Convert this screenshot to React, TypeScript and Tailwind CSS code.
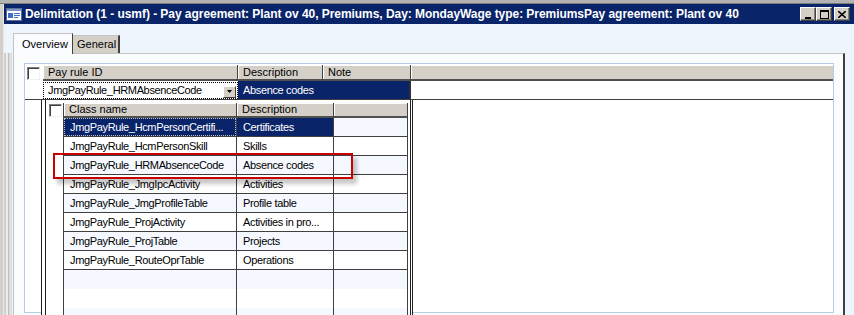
import React from "react";

const classRows = [
  { name: "JmgPayRule_HcmPersonCertifi...", desc: "Certificates" },
  { name: "JmgPayRule_HcmPersonSkill", desc: "Skills" },
  { name: "JmgPayRule_HRMAbsenceCode", desc: "Absence codes" },
  { name: "JmgPayRule_JmgIpcActivity", desc: "Activities" },
  { name: "JmgPayRule_JmgProfileTable", desc: "Profile table" },
  { name: "JmgPayRule_ProjActivity", desc: "Activities in pro..." },
  { name: "JmgPayRule_ProjTable", desc: "Projects" },
  { name: "JmgPayRule_RouteOprTable", desc: "Operations" },
];

function Check() {
  return (
    <div className="w-[13px] h-[13px] bg-white border border-t-[#808080] border-l-[#808080] border-r-[#f0f0f0] border-b-[#f0f0f0] shadow-[inset_1px_1px_0_#404040]" />
  );
}

function WinButton({ children }: { children: React.ReactNode }) {
  return (
    <div className="w-[16px] h-[14px] bg-[#d4d0c8] border border-t-white border-l-white border-r-[#404040] border-b-[#404040] shadow-[inset_-1px_-1px_0_#808080] flex items-center justify-center">
      {children}
    </div>
  );
}

function AppIcon() {
  return (
    <svg width="16" height="13" viewBox="0 0 16 13">
      <rect x="0.5" y="0.5" width="15" height="12" fill="#fff" stroke="#5a6f9a" />
      <rect x="1" y="1" width="14" height="2" fill="#7d93c4" />
      <rect x="2" y="5" width="5" height="5" fill="#3d6fcf" />
      <rect x="8" y="5" width="6" height="1" fill="#3d6fcf" />
      <rect x="8" y="7" width="6" height="1" fill="#3d6fcf" />
      <rect x="8" y="9" width="4" height="1" fill="#3d6fcf" />
    </svg>
  );
}

function HeadCell({ children, last }: { children?: React.ReactNode; last?: boolean }) {
  return (
    <div
      className={`h-[16px] bg-[#d4d0c8] border-b-2 border-b-[#505050] pl-[5px] leading-[14px] tracking-normal whitespace-nowrap overflow-hidden shadow-[inset_1px_1px_0_#ffffff] ${
        last ? "" : "border-r border-r-[#404040]"
      }`}
    >
      {children}
    </div>
  );
}

function ClassList() {
  const empty = [0, 1, 2, 3];
  return (
    <div className="absolute left-[16px] top-[36px] w-[372px] h-[230px] bg-white border-x border-[#202020] pl-[3px] pr-[1px]">
      <div className="h-full border-x border-[#202020] pt-[3px]">
        <div className="grid grid-cols-[17px_173px_97px_74px_1fr]">
          <div className="h-[15px] pl-[3px] pt-[1px]">
            <Check />
          </div>
          <div className="h-[15px] bg-[#d4d0c8] border-l border-l-[#404040] border-b-2 border-b-[#505050] pl-[5px] leading-[13px] tracking-normal shadow-[inset_1px_1px_0_#ffffff]">
            Class name
          </div>
          <div className="h-[15px] bg-[#d4d0c8] border-l border-l-[#404040] border-b-2 border-b-[#505050] pl-[5px] leading-[13px] tracking-normal shadow-[inset_1px_1px_0_#ffffff]">
            Description
          </div>
          <div className="h-[15px] bg-[#d4d0c8] border-l border-l-[#404040] border-b-2 border-b-[#505050] shadow-[inset_1px_1px_0_#ffffff]" />
          <div className="h-[15px] border-l border-l-[#404040]" />

          {classRows.map((r, i) => {
            const shade = i % 2 === 0 ? "bg-[#f5f8fe]" : "bg-white";
            const sel = i === 0;
            return (
              <React.Fragment key={r.name}>
                <div className="h-[19px] bg-white" />
                <div
                  className={`h-[19px] border-l border-l-[#404040] border-b border-b-[#404040] ${
                    sel ? "bg-[#0a246a] text-white" : shade
                  }`}
                >
                  <div
                    className={`h-full pl-[5px] leading-[17px] whitespace-nowrap ${
                      sel ? "border border-dotted border-[#c0c0c0]" : "border border-transparent"
                    }`}
                  >
                    {r.name}
                  </div>
                </div>
                <div
                  className={`h-[19px] pl-[6px] leading-[18px] whitespace-nowrap border-l border-l-[#404040] border-b border-b-[#404040] ${
                    sel ? "bg-[#0a246a] text-white" : shade
                  }`}
                >
                  {r.desc}
                </div>
                <div className={`h-[19px] border-l border-l-[#404040] border-b border-b-[#404040] ${shade}`} />
                <div className="h-[19px] border-l border-l-[#404040] bg-white" />
              </React.Fragment>
            );
          })}

          {empty.map((k) => {
            const shade = k % 2 === 0 ? "bg-[#f5f8fe]" : "bg-white";
            return (
              <React.Fragment key={k}>
                <div className="h-[19px] bg-white" />
                <div className={`h-[19px] border-l border-l-[#404040] ${shade}`} />
                <div className={`h-[19px] border-l border-l-[#404040] ${shade}`} />
                <div className={`h-[19px] border-l border-l-[#404040] ${shade}`} />
                <div className="h-[19px] border-l border-l-[#404040] bg-white" />
              </React.Fragment>
            );
          })}
        </div>
      </div>
    </div>
  );
}

export default function App() {
  return (
    <div className="relative w-[854px] h-[315px] overflow-hidden bg-[#eef5fd] text-[11px] tracking-[-0.35px] text-black font-['Liberation_Sans',Arial,sans-serif] flex flex-col">
      {/* window behind, cut off */}
      <div className="h-[4px] shrink-0 bg-[#b4b4b4] border-b border-[#7c7c7c]" />

      <div className="flex flex-1 min-h-0">
        {/* outer frame */}
        <div className="w-[4px] shrink-0 bg-[#d4d0c8] border-r border-[#e8e8e8]" />

        <div className="flex-1 flex flex-col min-w-0">
          {/* title bar */}
          <div className="h-[20px] shrink-0 bg-[#0a246a] flex items-center pl-[2px] pr-[4px]">
            <AppIcon />
            <div className="ml-[3px] flex-1 text-white font-bold text-[12px] tracking-[-0.05px] whitespace-nowrap overflow-hidden leading-[20px]">
              Delimitation (1 - usmf) - Pay agreement: Plant ov 40, Premiums, Day: MondayWage type: PremiumsPay agreement: Plant ov 40
            </div>
            <div className="flex items-center">
              <WinButton>
                <div className="w-[6px] h-[2px] bg-black mt-[7px] -ml-[1px]" />
              </WinButton>
              <WinButton>
                <div className="w-[9px] h-[9px] border border-black border-t-2" />
              </WinButton>
              <div className="w-[2px]" />
              <WinButton>
                <svg width="8" height="7" viewBox="0 0 8 7">
                  <path d="M0 0 L8 7 M8 0 L0 7" stroke="#000" strokeWidth="1.6" />
                </svg>
              </WinButton>
            </div>
          </div>

          {/* form body */}
          <div className="flex-1 flex flex-col pr-[9px] pt-[9px] min-h-0">
            {/* tabs */}
            <div className="flex items-end h-[20px] shrink-0 ml-[9px]">
              <div className="relative z-10 h-[21px] -mb-[1px] w-[60px] bg-[#fbfcfe] border-t border-l border-[#c4c4c4] border-r border-r-[#404040] pl-[8px] leading-[20px] tracking-normal">
                Overview
              </div>
              <div className="h-[18px] w-[47px] bg-[#d4d0c8] border-t border-[#c4c4c4] border-r-2 border-r-[#404040] pl-[4px] leading-[17px] tracking-normal">
                General
              </div>
            </div>

            <div className="flex-1 flex min-h-0">
              {/* splitter strip on the left */}
              <div className="w-[9px] shrink-0 bg-[linear-gradient(90deg,#d0d0d0_0_2px,#ececec_2px_4px,#bdbdbd_4px_5px,#dedede_5px_8px,#eef5fd_8px_9px)]" />

              {/* tab page */}
              <div className="flex-1 bg-[#fbfcfe] border-t border-l border-[#c4c4c4] border-r-2 border-r-[#404040] pl-[10px] pr-[9px] pt-[9px] min-h-0">
                <div className="relative h-[250px] bg-white border border-[#b7cbe3] pt-[1px]">
                  <div className="grid grid-cols-[18px_195px_85px_88px_1fr]">
                    <div className="h-[16px] pl-[2px] pt-[2px] bg-white">
                      <Check />
                    </div>
                    <HeadCell>Pay rule ID</HeadCell>
                    <HeadCell>Description</HeadCell>
                    <HeadCell>Note</HeadCell>
                    <HeadCell last />

                    <div className="h-[19px] bg-white border-b border-b-[#404040]" />
                    <div className="h-[19px] border-b border-b-[#404040] pt-[1px]">
                      <div className="h-[17px] bg-white border border-dotted border-black flex items-center pl-[4px] pr-[1px]">
                        <span className="flex-1 whitespace-nowrap">JmgPayRule_HRMAbsenceCode</span>
                        <div className="w-[13px] h-[12px] mt-[2px] bg-[#d4d0c8] border border-t-white border-l-white border-r-[#404040] border-b-[#404040] flex items-center justify-center">
                          <svg width="5" height="3" viewBox="0 0 5 3">
                            <path d="M0 0 H5 L2.5 3 Z" fill="#000" />
                          </svg>
                        </div>
                      </div>
                    </div>
                    <div className="h-[19px] bg-[#0a246a] text-white pl-[5px] leading-[18px] border-b border-b-[#404040] whitespace-nowrap">
                      Absence codes
                    </div>
                    <div className="h-[19px] bg-[#0a246a] border-r-2 border-r-[#303030] border-b border-b-[#404040]" />
                    <div className="h-[19px] bg-white border-b border-b-[#404040]" />
                  </div>

                  <ClassList />
                </div>
              </div>
            </div>
          </div>
        </div>
      </div>

      {/* highlight annotation */}
      <div className="absolute left-[53px] top-[153px] w-[300px] h-[26px] border-2 border-[#c80000] shadow-[4px_5px_4px_rgba(0,0,0,0.22)]" />
    </div>
  );
}
